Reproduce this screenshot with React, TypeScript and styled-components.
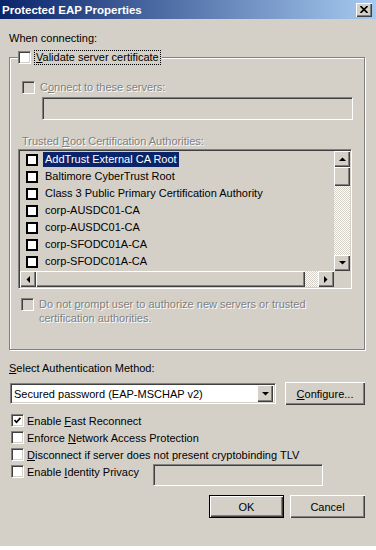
import styled, { createGlobalStyle, css } from 'styled-components';

const GlobalStyle = createGlobalStyle`
  html, body {
    margin: 0;
    padding: 0;
    background: #fff;
  }
  body {
    font-family: 'Liberation Sans', Arial, sans-serif;
    font-size: 11px;
    color: #000;
  }
`;

const raised = css`
  box-sizing: border-box;
  background: #d4d0c8;
  box-shadow: inset 1px 1px #fff, inset -1px -1px #404040, inset -2px -2px #808080;
`;

const sunken = css`
  box-sizing: border-box;
  border: 1px solid;
  border-color: #808080 #fff #fff #808080;
  box-shadow: inset 1px 1px #404040, inset -1px -1px #d4d0c8;
`;

const certs = [
  'AddTrust External CA Root',
  'Baltimore CyberTrust Root',
  'Class 3 Public Primary Certification Authority',
  'corp-AUSDC01-CA',
  'corp-AUSDC01-CA',
  'corp-SFODC01A-CA',
  'corp-SFODC01A-CA',
];

function Arrow({ dir }: { dir: 'up' | 'down' | 'left' | 'right' }) {
  const pts = {
    up: '0,4 7,4 3.5,0.5',
    down: '0,0 7,0 3.5,3.5',
    left: '4,0 4,7 0.5,3.5',
    right: '0,0 0,7 3.5,3.5',
  }[dir];
  const vertical = dir === 'up' || dir === 'down';
  return (
    <svg width={vertical ? 7 : 4} height={vertical ? 4 : 7} viewBox={vertical ? '0 0 7 4' : '0 0 4 7'}>
      <polygon points={pts} fill="#000" />
    </svg>
  );
}

function Check({ checked, disabled }: { checked?: boolean; disabled?: boolean }) {
  return (
    <Box $disabled={disabled}>
      {checked && (
        <svg width="7" height="7" viewBox="0 0 7 7">
          <path d="M0.5 3 L2.5 5.2 L6.5 0.8" stroke="#000" strokeWidth="1.7" fill="none" />
        </svg>
      )}
    </Box>
  );
}

export default function App() {
  return (
    <>
      <GlobalStyle />
      <Window>
        <TitleBar>
          <TitleText>Protected EAP Properties</TitleText>
          <CloseButton>
            <svg width="8" height="7" viewBox="0 0 8 7">
              <path d="M0.5 0 L7.5 7 M7.5 0 L0.5 7" stroke="#000" strokeWidth="1.6" />
            </svg>
          </CloseButton>
        </TitleBar>

        <Body>
          <Caption>When connecting:</Caption>

          <GroupBox>
            <Legend>
              <Check />
              <FocusLabel>
                <Key>V</Key>alidate server certificate
              </FocusLabel>
            </Legend>

            <CheckRow $indent={4}>
              <Check disabled />
              <Caption $disabled>
                C<Key>o</Key>nnect to these servers:
              </Caption>
            </CheckRow>
            <ServersInput />

            <ListCaption $disabled>
              Trusted <Key>R</Key>oot Certification Authorities:
            </ListCaption>
            <ListBox>
              <Items>
                {certs.map((c, i) => (
                  <Item key={i}>
                    <ListCheck />
                    <ItemText $selected={i === 0}>{c}</ItemText>
                  </Item>
                ))}
              </Items>
              <VScroll>
                <ScrollButton>
                  <Arrow dir="up" />
                </ScrollButton>
                <Thumb $length={19} />
                <Track />
                <ScrollButton>
                  <Arrow dir="down" />
                </ScrollButton>
              </VScroll>
              <HScroll>
                <ScrollButton>
                  <Arrow dir="left" />
                </ScrollButton>
                <Thumb />
                <Track $length={13} />
                <ScrollButton>
                  <Arrow dir="right" />
                </ScrollButton>
              </HScroll>
              <Corner />
            </ListBox>

            <PromptRow>
              <Check disabled />
              <Caption $disabled $tall>
                Do not <Key>p</Key>rompt user to authorize new servers or trusted
                <br />
                certification authorities.
              </Caption>
            </PromptRow>
          </GroupBox>

          <MethodCaption>
            <Key>S</Key>elect Authentication Method:
          </MethodCaption>
          <MethodRow>
            <Combo>
              <ComboText>Secured password (EAP-MSCHAP v2)</ComboText>
              <ComboButton>
                <Arrow dir="down" />
              </ComboButton>
            </Combo>
            <PushButton $width={80}>
              <Key>C</Key>onfigure...
            </PushButton>
          </MethodRow>

          <Options>
            <OptionRow>
              <Check checked />
              <span>
                Enable <Key>F</Key>ast Reconnect
              </span>
            </OptionRow>
            <OptionRow>
              <Check />
              <span>
                Enforce <Key>N</Key>etwork Access Protection
              </span>
            </OptionRow>
            <OptionRow>
              <Check />
              <span>
                <Key>D</Key>isconnect if server does not present cryptobinding TLV
              </span>
            </OptionRow>
            <IdentityRow>
              <OptionRow $width={144}>
                <Check />
                <span>
                  Enable <Key>I</Key>dentity Privacy
                </span>
              </OptionRow>
              <IdentityInput />
            </IdentityRow>
          </Options>

          <Actions>
            <PushButton $default>OK</PushButton>
            <PushButton>Cancel</PushButton>
          </Actions>
        </Body>
      </Window>
    </>
  );
}

const Window = styled.div`
  width: 376px;
  height: 546px;
  background: #d4d0c8;
  display: flex;
  flex-direction: column;
  box-sizing: border-box;
`;

const TitleBar = styled.div`
  height: 19px;
  flex: none;
  display: flex;
  align-items: center;
  justify-content: space-between;
  padding: 0 4px 0 2px;
  background: linear-gradient(to right, #0a246a, #a6caf0);
`;

const TitleText = styled.span`
  color: #fff;
  font-weight: bold;
  font-size: 11.5px;
  line-height: 14px;
`;

const CloseButton = styled.span`
  ${raised};
  width: 16px;
  height: 14px;
  display: flex;
  align-items: center;
  justify-content: center;
`;

const Body = styled.div`
  display: flex;
  flex-direction: column;
  padding: 13px 11px 0 9px;
`;

const Key = styled.span`
  text-decoration: underline;
`;

const Caption = styled.div<{ $disabled?: boolean; $tall?: boolean }>`
  line-height: ${(p) => (p.$tall ? '14px' : '13px')};
  white-space: nowrap;
  ${(p) =>
    p.$disabled &&
    css`
      color: #808080;
      text-shadow: 1px 1px 0 #fff;
    `}
`;

const GroupBox = styled.fieldset`
  margin: 6px 0 0;
  padding: 16px 12px 24px 8px;
  min-width: 0;
  border: 1px solid #808080;
  box-shadow: inset 1px 1px #fff, 1px 1px #fff;
`;

const Legend = styled.legend`
  padding: 0 2px 0 0;
  display: flex;
  align-items: center;
  gap: 4px;
  background: #d4d0c8;
`;

const FocusLabel = styled.span`
  line-height: 13px;
  padding: 0 1px;
  outline: 1px dotted #000;
`;

const Box = styled.span<{ $disabled?: boolean }>`
  ${sunken};
  width: 13px;
  height: 13px;
  flex: none;
  display: flex;
  align-items: center;
  justify-content: center;
  background: ${(p) => (p.$disabled ? '#d4d0c8' : '#fff')};
`;

const CheckRow = styled.div<{ $indent?: number }>`
  display: flex;
  align-items: center;
  gap: 5px;
  height: 15px;
  margin-left: ${(p) => p.$indent ?? 0}px;
`;

const ServersInput = styled.div`
  ${sunken};
  height: 23px;
  margin: 2px -1px 0 24px;
  background: #d4d0c8;
`;

const ListCaption = styled(Caption)`
  margin: 15px 0 0 4px;
`;

const ListBox = styled.div`
  ${sunken};
  margin-top: 1px;
  height: 140px;
  padding: 1px;
  background: #d4d0c8;
  display: grid;
  grid-template-columns: 1fr 16px;
  grid-template-rows: 1fr 16px;
`;

const Items = styled.div`
  display: flex;
  flex-direction: column;
  overflow: hidden;
`;

const Item = styled.div`
  height: 17px;
  flex: none;
  display: flex;
  align-items: center;
  gap: 5px;
  padding-left: 6px;
  white-space: nowrap;
`;

const ListCheck = styled.span`
  width: 12px;
  height: 12px;
  flex: none;
  box-sizing: border-box;
  border: 2px solid #000;
  background: #fff;
`;

const ItemText = styled.span<{ $selected?: boolean }>`
  padding: 0 2px;
  line-height: 15px;
  background: ${(p) => (p.$selected ? '#0a246a' : 'transparent')};
  color: ${(p) => (p.$selected ? '#fff' : '#000')};
`;

const checker = css`
  background: repeating-conic-gradient(#d4d0c8 0% 25%, #fff 0% 50%) 0 0 / 2px 2px;
`;

const VScroll = styled.div`
  display: flex;
  flex-direction: column;
  ${checker};
`;

const HScroll = styled.div`
  display: flex;
  ${checker};
`;

const ScrollButton = styled.div`
  ${raised};
  width: 16px;
  height: 16px;
  flex: none;
  display: flex;
  align-items: center;
  justify-content: center;
`;

const Thumb = styled.div<{ $length?: number }>`
  ${raised};
  flex: ${(p) => (p.$length ? `0 0 ${p.$length}px` : '1 1 auto')};
`;

const Track = styled.div<{ $length?: number }>`
  flex: ${(p) => (p.$length ? `0 0 ${p.$length}px` : '1 1 auto')};
`;

const Corner = styled.div`
  background: #d4d0c8;
`;

const PromptRow = styled.div`
  display: flex;
  align-items: flex-start;
  gap: 5px;
  margin: 8px 0 0 3px;

  & > span:first-child {
    margin-top: 1px;
  }
`;

const MethodCaption = styled(Caption)`
  margin-top: 12px;
`;

const MethodRow = styled.div`
  display: flex;
  align-items: center;
  gap: 9px;
  margin: 7px 0 0 1px;
`;

const Combo = styled.div`
  ${sunken};
  width: 266px;
  height: 21px;
  padding: 2px;
  background: #fff;
  display: flex;
  align-items: center;
`;

const ComboText = styled.span`
  flex: 1;
  padding-left: 1px;
  white-space: nowrap;
`;

const ComboButton = styled.span`
  ${raised};
  width: 16px;
  height: 17px;
  display: flex;
  align-items: center;
  justify-content: center;
`;

const PushButton = styled.button<{ $width?: number; $default?: boolean }>`
  ${raised};
  width: ${(p) => p.$width ?? 75}px;
  height: 23px;
  padding: 0;
  font: inherit;
  color: #000;
  border: ${(p) => (p.$default ? '1px solid #000' : 'none')};
`;

const Options = styled.div`
  display: flex;
  flex-direction: column;
  margin-top: 7px;
`;

const OptionRow = styled.div<{ $width?: number }>`
  display: flex;
  align-items: center;
  gap: 3px;
  height: 17px;
  padding-left: 2px;
  white-space: nowrap;
  ${(p) => p.$width && `width: ${p.$width}px; flex: none; box-sizing: border-box;`}
`;

const IdentityRow = styled.div`
  display: flex;
  align-items: flex-start;
`;

const IdentityInput = styled.div`
  ${sunken};
  width: 170px;
  height: 22px;
  margin-top: 1px;
  background: #d4d0c8;
`;

const Actions = styled.div`
  display: flex;
  justify-content: flex-end;
  gap: 6px;
  margin-top: 9px;
`;
